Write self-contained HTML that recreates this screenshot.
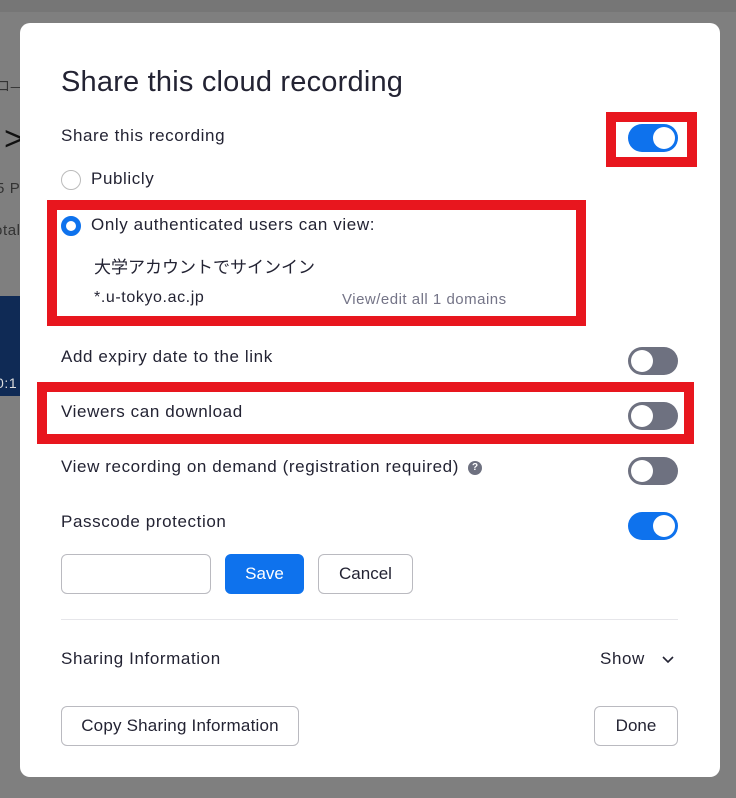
<!DOCTYPE html>
<html><head><meta charset="utf-8"><style>
*{margin:0;padding:0;box-sizing:border-box}
body{width:736px;height:798px;background:#7f7f7f;position:relative;overflow:hidden;font-family:"Liberation Sans","Noto Sans CJK JP",sans-serif;color:#232333}
.a{position:absolute}
.modal{left:20px;top:23px;width:700px;height:754px;background:#fff;border-radius:10px}
.t{font-size:17px;color:#232333;white-space:nowrap;letter-spacing:0.6px}
.tg{width:50px;height:28px;border-radius:14px;background:#6e7180}
.tg::after{content:"";position:absolute;left:3px;top:3px;width:22px;height:22px;border-radius:50%;background:#fff}
.tg.on{background:#0e72ed}
.tg.on::after{left:25px}
.red{border:10px solid #e8161e}
.btn{border:1px solid #babac0;border-radius:6px;background:#fff;font-size:17px;text-align:center}
</style></head><body>
<div class="a" style="left:0;top:0;width:736px;height:12px;background:#767676"></div>
<div class="a t" style="left:-4px;top:76px;color:#333;font-size:14px">ロ—</div>
<div class="a" style="left:4px;top:120px;font-size:34px;color:#111">&gt;</div>
<div class="a t" style="left:-4px;top:180px;color:#333;font-size:15px">5 P</div>
<div class="a t" style="left:-6px;top:222px;color:#333;font-size:15px">otal</div>
<div class="a" style="left:0;top:296px;width:20px;height:100px;background:#0f2a55"></div>
<div class="a t" style="left:-4px;top:375px;color:#ddd;font-size:14px">0:1</div>
<div class="a modal"></div>
<div class="a t" style="left:61px;top:66px;font-size:29px;letter-spacing:0.2px">Share this cloud recording</div>
<div class="a t" style="left:61px;top:126px">Share this recording</div>
<div class="a red" style="left:606px;top:112px;width:91px;height:55px"></div>
<div class="a tg on" style="left:628px;top:124px"></div>
<div class="a" style="left:61px;top:170px;width:20px;height:20px;border-radius:50%;border:1px solid #bbb"></div>
<div class="a t" style="left:91px;top:169px">Publicly</div>
<div class="a red" style="left:47px;top:200px;width:539px;height:126px"></div>
<div class="a" style="left:61px;top:216px;width:20px;height:20px;border-radius:50%;border:5px solid #0e72ed"></div>
<div class="a t" style="left:91px;top:215px">Only authenticated users can view:</div>
<div class="a t" style="left:94px;top:253px;letter-spacing:0">大学アカウントでサインイン</div>
<div class="a t" style="left:94px;top:289px;font-size:16px">*.u-tokyo.ac.jp</div>
<div class="a t" style="left:342px;top:291px;font-size:15px;color:#747487;letter-spacing:0.5px">View/edit all 1 domains</div>
<div class="a t" style="left:61px;top:347px">Add expiry date to the link</div>
<div class="a tg" style="left:628px;top:347px"></div>
<div class="a red" style="left:37px;top:382px;width:657px;height:62px"></div>
<div class="a t" style="left:61px;top:402px">Viewers can download</div>
<div class="a tg" style="left:628px;top:402px"></div>
<div class="a t" style="left:61px;top:457px">View recording on demand (registration required)</div>
<div class="a" style="left:468px;top:461px;width:14px;height:14px;border-radius:50%;background:#6e7180;color:#fff;font-size:10px;font-weight:bold;text-align:center;line-height:14px">?</div>
<div class="a tg" style="left:628px;top:457px"></div>
<div class="a t" style="left:61px;top:512px">Passcode protection</div>
<div class="a tg on" style="left:628px;top:512px"></div>
<div class="a btn" style="left:61px;top:554px;width:150px;height:40px"></div>
<div class="a btn" style="left:225px;top:554px;width:79px;height:40px;background:#0e72ed;border-color:#0e72ed;color:#fff;line-height:38px">Save</div>
<div class="a btn" style="left:318px;top:554px;width:95px;height:40px;line-height:38px">Cancel</div>
<div class="a" style="left:61px;top:619px;width:617px;height:1px;background:#e6e6ea"></div>
<div class="a t" style="left:61px;top:649px">Sharing Information</div>
<div class="a t" style="left:600px;top:649px">Show</div>
<svg class="a" style="left:661px;top:655px" width="14" height="10"><path d="M2 2l5 5 5-5" fill="none" stroke="#232333" stroke-width="1.6"/></svg>
<div class="a btn" style="left:61px;top:706px;width:238px;height:40px;line-height:38px;letter-spacing:0.2px">Copy Sharing Information</div>
<div class="a btn" style="left:594px;top:706px;width:84px;height:40px;line-height:38px">Done</div>
</body></html>
